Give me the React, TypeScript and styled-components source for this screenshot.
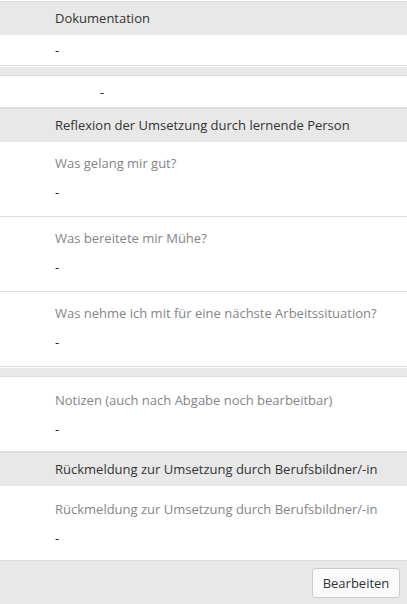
import styled, { createGlobalStyle } from "styled-components";

const GlobalStyle = createGlobalStyle`
  html, body {
    margin: 0;
    padding: 0;
    background: #ffffff;
  }
  body {
    font-family: "Open Sans", "Liberation Sans", Arial, sans-serif;
    font-size: 13px;
    color: #333333;
  }
`;

const Page = styled.div`
  display: flex;
  flex-direction: column;
  padding-top: 1px;
`;

const Header = styled.div`
  background-color: #e8e8e8;
  border-top: 1px solid #dcdcdc;
  height: 33px;
  line-height: 33px;
  padding-left: 55px;
  color: #333333;
`;

const ValueRow = styled.div<{ $indent?: number; $height: number }>`
  height: ${(p) => p.$height}px;
  display: flex;
  align-items: center;
  padding-left: ${(p) => p.$indent ?? 55}px;
  border-bottom: 1px solid #dcdcdc;
  line-height: 18px;
  color: #222222;
`;

const Spacer = styled.div<{ $height: number }>`
  margin-top: 1px;
  height: ${(p) => p.$height}px;
  background-color: #e8e8e8;
  border-bottom: 1px solid #dcdcdc;
`;

const Field = styled.div<{ $top?: number }>`
  display: flex;
  flex-direction: column;
  gap: 11px;
  height: 75px;
  box-sizing: border-box;
  padding: ${(p) => p.$top ?? 12}px 0 0 55px;
  border-bottom: 1px solid #dcdcdc;
  line-height: 18px;
`;

const Label = styled.div`
  color: #858585;
`;

const Value = styled.div`
  color: #222222;
`;

const Footer = styled.div`
  background-color: #e8e8e8;
  height: 44px;
  display: flex;
  justify-content: flex-end;
  align-items: flex-start;
  padding: 7px 7px 0 0;
  box-sizing: border-box;
`;

const Button = styled.button`
  font-family: "Open Sans", "Liberation Sans", Arial, sans-serif;
  font-size: 13px;
  color: #333333;
  background: #fafafa;
  border: 1px solid #cccccc;
  border-radius: 3px;
  width: 88px;
  height: 30px;
  padding: 0;
  cursor: pointer;
`;

type FieldItem = { label: string; value: string; top?: number };

const reflexion: FieldItem[] = [
  { label: "Was gelang mir gut?", value: "-" },
  { label: "Was bereitete mir Mühe?", value: "-" },
  { label: "Was nehme ich mit für eine nächste Arbeitssituation?", value: "-" },
];

export default function App() {
  return (
    <>
      <GlobalStyle />
      <Page>
        <Header>Dokumentation</Header>
        <ValueRow $height={30}>-</ValueRow>
        <Spacer $height={8} />
        <ValueRow $height={31} $indent={100}>
          -
        </ValueRow>
        <Header>Reflexion der Umsetzung durch lernende Person</Header>
        {reflexion.map((f) => (
          <Field key={f.label} $top={f.top}>
            <Label>{f.label}</Label>
            <Value>{f.value}</Value>
          </Field>
        ))}
        <Spacer $height={8} />
        <Field $top={14}>
          <Label>Notizen (auch nach Abgabe noch bearbeitbar)</Label>
          <Value>-</Value>
        </Field>
        <Header>Rückmeldung zur Umsetzung durch Berufsbildner/-in</Header>
        <Field $top={14}>
          <Label>Rückmeldung zur Umsetzung durch Berufsbildner/-in</Label>
          <Value>-</Value>
        </Field>
        <Footer>
          <Button type="button">Bearbeiten</Button>
        </Footer>
      </Page>
    </>
  );
}
